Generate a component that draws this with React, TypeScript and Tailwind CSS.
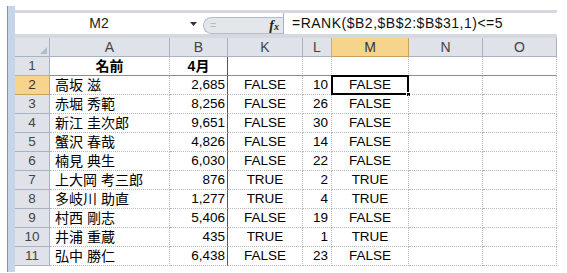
const cols = [120, 58, 75, 29, 77, 74, 74];

const rows = [
  ["2", "高坂 滋", "2,685", "FALSE", "10", "FALSE"],
  ["3", "赤堀 秀範", "8,256", "FALSE", "26", "FALSE"],
  ["4", "新江 圭次郎", "9,651", "FALSE", "30", "FALSE"],
  ["5", "蟹沢 春哉", "4,826", "FALSE", "14", "FALSE"],
  ["6", "楠見 典生", "6,030", "FALSE", "22", "FALSE"],
  ["7", "上大岡 考三郎", "876", "TRUE", "2", "TRUE"],
  ["8", "多岐川 助直", "1,277", "TRUE", "4", "TRUE"],
  ["9", "村西 剛志", "5,406", "FALSE", "19", "FALSE"],
  ["10", "井浦 重蔵", "435", "TRUE", "1", "TRUE"],
  ["11", "弘中 勝仁", "6,438", "FALSE", "23", "FALSE"],
];

const font = "font-['Liberation_Sans','Noto_Sans_CJK_JP',sans-serif]";

function ColHeader({ label, width, active }: { label: string; width: number; active?: boolean }) {
  return (
    <div
      style={{ width }}
      className={
        "flex items-center justify-center border-r border-b text-[14px] " +
        (active
          ? "bg-[#f7d48c] border-[#c9a25a] text-[#333]"
          : "bg-[#dfe3e9] border-[#a9b3c0] text-[#444]")
      }
    >
      {label}
    </div>
  );
}

function DataRow({ r, selected }: { r: string[]; selected?: boolean }) {
  const cell = "h-full flex items-center border-r border-b border-dotted border-[#b9b9b9]";
  return (
    <div className="flex h-[19px]">
      <div
        className={
          "w-[35px] h-full flex items-center justify-center border-r border-b text-[13.5px] " +
          (selected
            ? "bg-[#f7d48c] border-[#c9a25a] text-[#333]"
            : "bg-[#dfe3e9] border-[#a9b3c0] text-[#444]")
        }
      >
        {r[0]}
      </div>
      <div className={cell + " w-[120px] pl-[5px] text-[14px]"}>{r[1]}</div>
      <div className="w-[58px] h-full flex items-center justify-end pr-[2px] border-r border-[#555] border-b border-b-[#b9b9b9] [border-bottom-style:dotted]">
        {r[2]}
      </div>
      <div className={cell + " w-[75px] justify-center"}>{r[3]}</div>
      <div className={cell + " w-[29px] justify-end pr-[3px]"}>{r[4]}</div>
      <div className={cell + " w-[77px] justify-center relative"}>
        {r[5]}
        {selected && (
          <div className="absolute -left-px -top-px -right-px -bottom-px border-2 border-black">
            <div className="absolute -right-[4px] -bottom-[4px] w-[5px] h-[5px] bg-black border border-white" />
          </div>
        )}
      </div>
      <div className={cell + " w-[74px]"} />
      <div className={cell + " w-[74px]"} />
    </div>
  );
}

export default function App() {
  return (
    <div className={"w-[567px] h-[273px] bg-white flex overflow-hidden text-black text-[13.5px] " + font}>
      <div className="w-[7px]" />
      <div className="w-[8px] h-[266px] mt-[6px] bg-[#c7d5e8] border-l border-[#7f93b0]" />
      <div className="w-[542px] flex flex-col">
        <div className="h-[10px]" />
        <div className="h-[3px] bg-[#d5d9df]" />
        <div className="h-[21px] flex bg-white">
          <div className="w-[168px] flex items-center justify-center text-[14px] text-[#222]">M2</div>
          <div className="w-[20px] flex items-center justify-center">
            <svg width="7" height="4" viewBox="0 0 7 4">
              <path d="M0 0h7L3.5 4z" fill="#333" />
            </svg>
          </div>
          <div className="w-[80px] self-end h-[17px] rounded-l-[9px] bg-[#e3e6eb] border border-r-0 border-[#b4bcc8] flex items-center justify-between pl-[6px] pr-[4px]">
            <span className="text-[11px] text-[#b6bcc4] leading-none">=</span>
            <span className="italic font-bold font-['Liberation_Serif',serif] text-[14px] text-[#222] leading-none">
              f<span className="text-[10px]">x</span>
            </span>
          </div>
          <div className="flex-1 border-l border-[#a9b3c0] flex items-center pl-[8px] text-[14px] tracking-[0.5px] text-[#111]">
            =RANK($B2,$B$2:$B$31,1)&lt;=5
          </div>
        </div>
        <div className="h-[4px] bg-[#d5d9df]" />
        <div className="flex h-[19px]">
          <div className="w-[35px] bg-[#dfe3e9] border-r border-b border-[#a9b3c0] flex items-end justify-end p-[2px]">
            <svg width="7" height="7" viewBox="0 0 7 7">
              <path d="M7 0v7H0z" fill="#b5bbc3" />
            </svg>
          </div>
          {["A", "B", "K", "L", "M", "N", "O"].map((l, i) => (
            <ColHeader key={l} label={l} width={cols[i]} active={l === "M"} />
          ))}
        </div>
        <div className="flex h-[19px]">
          <div className="w-[35px] h-full flex items-center justify-center bg-[#dfe3e9] border-r border-b border-[#a9b3c0] text-[#444]">
            1
          </div>
          <div className="w-[120px] h-full flex items-center justify-center font-bold text-[14px] border-r border-dotted border-[#b9b9b9] border-b-[1.5px] border-b-[#8c8c8c] [border-bottom-style:solid]">
            名前
          </div>
          <div className="w-[58px] h-full flex items-center justify-center font-bold text-[14px] border-r border-[#555] border-b-[1.5px] border-b-[#8c8c8c]">
            4月
          </div>
          {[75, 29, 77, 74, 74].map((w, i) => (
            <div
              key={i}
              style={{ width: w }}
              className="h-full border-r border-dotted border-[#b9b9b9] border-b-[1.5px] border-b-[#8c8c8c] [border-bottom-style:solid]"
            />
          ))}
        </div>
        {rows.map((r) => (
          <DataRow key={r[0]} r={r} selected={r[0] === "2"} />
        ))}
      </div>
    </div>
  );
}
